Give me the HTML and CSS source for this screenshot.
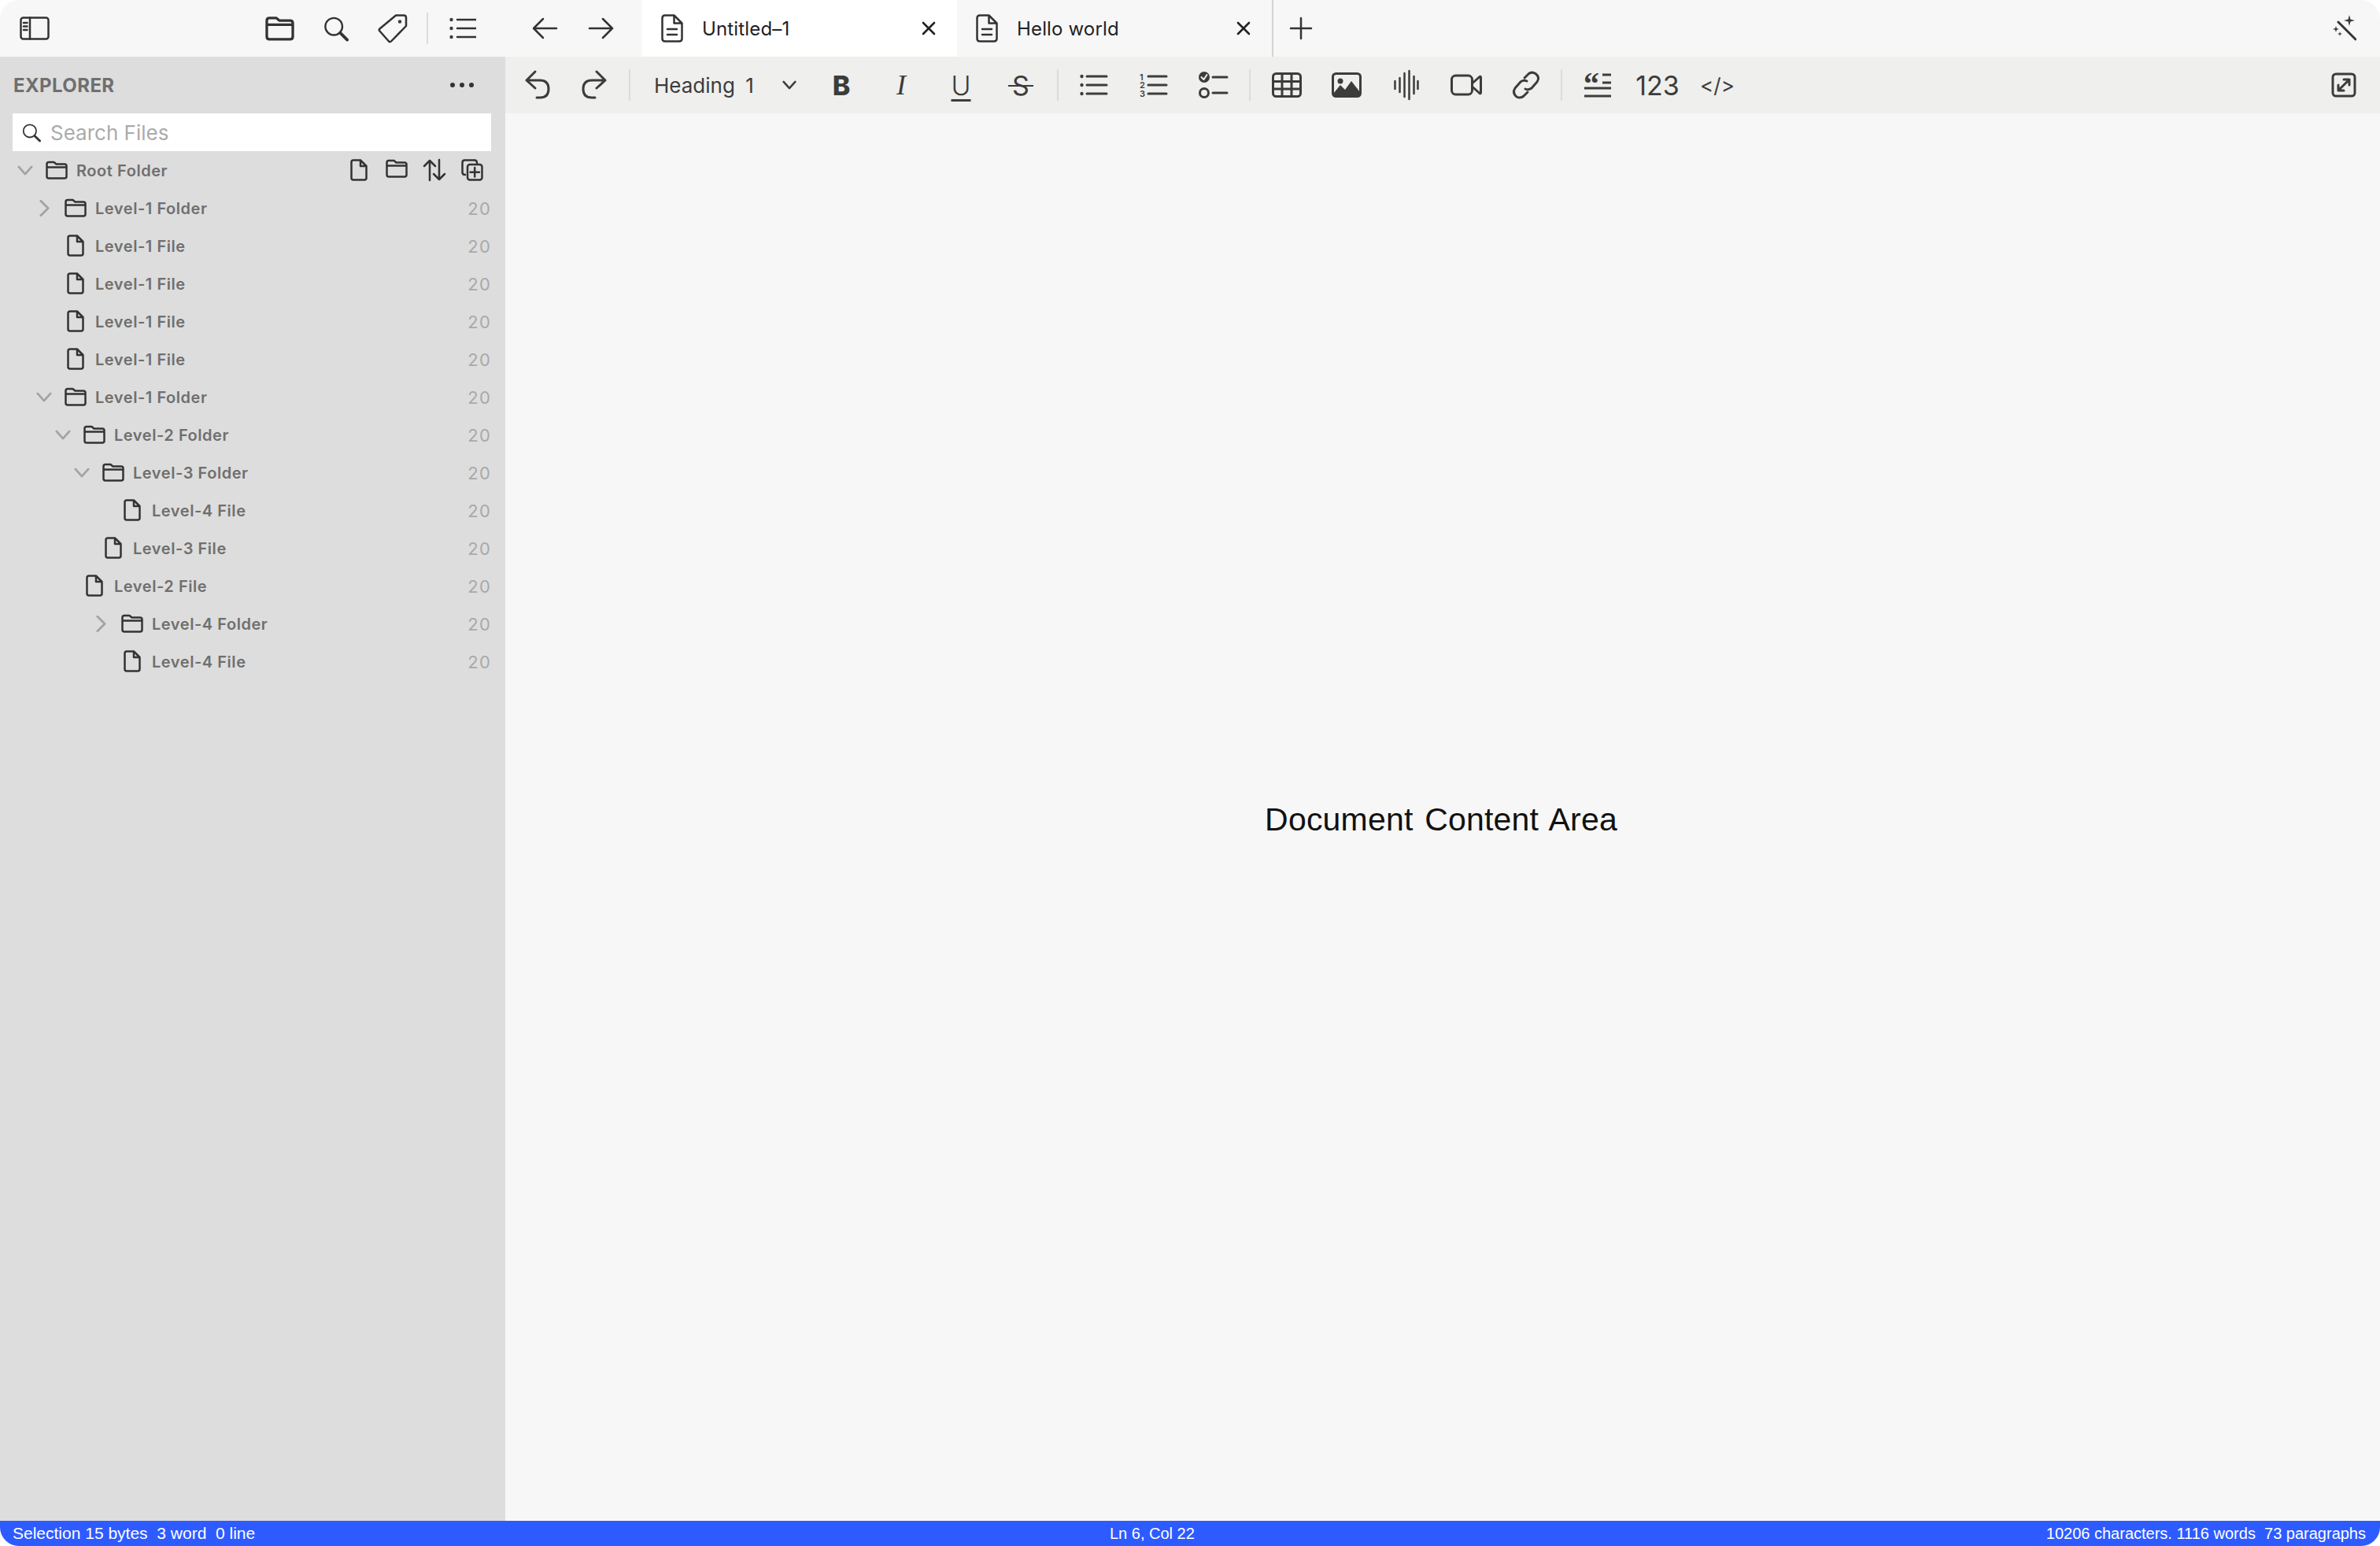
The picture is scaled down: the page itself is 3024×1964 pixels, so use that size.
FILE: index.html
```html
<!DOCTYPE html>
<html lang="en">
<head>
<meta charset="UTF-8">
<title>Explorer</title>
<link rel="stylesheet" href="styles.css">
</head>
<body>

<svg class="defs" width="0" height="0">
    <symbol id="i-folder" viewBox="0 0 28 24"><path d="M1.5 20V4.5Q1.5 2 4 2H10.5L13.5 4.5H24Q26.5 4.5 26.5 7V20Q26.5 22.5 24 22.5H4Q1.5 22.5 1.5 20ZM1.5 8.5H26.5"/></symbol>
    <symbol id="i-file" viewBox="0 0 22 28"><path d="M4 1.5H13L20.5 9V24Q20.5 26.5 18 26.5H4Q1.5 26.5 1.5 24V4Q1.5 1.5 4 1.5ZM13 1.5V9H20.5"/></symbol>
    <symbol id="i-doc" viewBox="0 0 28 36"><path d="M5 1.5H16.5L26.5 11.5V31Q26.5 34.5 23 34.5H5Q1.5 34.5 1.5 31V5Q1.5 1.5 5 1.5ZM16.5 1.5V11.5H26.5M8 19H20M8 26H20"/></symbol>
    <symbol id="i-search" viewBox="0 0 34 34"><circle cx="14" cy="14" r="11.5"/><path d="M22.5 22.5L32 32" stroke-width="4"/></symbol>
    <symbol id="i-list" viewBox="0 0 34 30"><path d="M10 4H34M10 15H34M10 26H34"/><circle class="fill" cx="2.5" cy="4" r="2.2"/><circle class="fill" cx="2.5" cy="15" r="2.2"/><circle class="fill" cx="2.5" cy="26" r="2.2"/></symbol>
    <symbol id="i-chev-down" viewBox="0 0 22 14"><path d="M2 2L11 12L20 2"/></symbol>
    <symbol id="i-chev-right" viewBox="0 0 14 24"><path d="M2 2L12 12L2 22"/></symbol>
    <symbol id="i-close" viewBox="0 0 18 18"><path d="M2 2L16 16M16 2L2 16"/></symbol>
</svg>

<div class="window">

    <header class="titlebar">
        <div class="side-tools">
            <button class="btn btn-toggle">
                <svg class="ic" width="38" height="30" viewBox="0 0 38 30"><rect x="1.5" y="1.5" width="35" height="27" rx="3"/><path d="M13 1.5V28.5M5 8H9.5M5 12.5H9.5M5 17H9.5" /></svg>
            </button>
            <span class="spring"></span>
            <button class="btn"><svg class="ic" width="37" height="32"><use href="#i-folder"/></svg></button>
            <button class="btn"><svg class="ic" width="32" height="33"><use href="#i-search"/></svg></button>
            <button class="btn">
                <svg class="ic" width="38" height="38" viewBox="0 0 38 38"><path d="M23 2.5H33Q36 2.5 36 5.5V16L17 35.5Q15.500 37 14 35.500L2.500 22.500Q1 21 2.500 19.500Z"/><circle class="fill" cx="28" cy="10.500" r="2.200"/></svg>
            </button>
            <span class="sep sep-top"></span>
            <button class="btn btn-last"><svg class="ic" width="34" height="30"><use href="#i-list"/></svg></button>
        </div>
        <div class="tabstrip">
            <div class="nav">
                <button class="btn btn-nav">
                    <svg class="ic" width="32" height="28" viewBox="0 0 32 28"><path d="M31 14H2M14 2L2 14L14 26"/></svg>
                </button>
                <button class="btn btn-nav">
                    <svg class="ic" width="32" height="28" viewBox="0 0 32 28"><path d="M1 14H30M18 2L30 14L18 26"/></svg>
                </button>
            </div>
            <div class="tab active">
                <svg class="ic" width="28" height="36"><use href="#i-doc"/></svg>
                <span class="tab-name">Untitled–1</span>
                <svg class="ic ic-x" width="18" height="18"><use href="#i-close"/></svg>
            </div>
            <div class="tab">
                <svg class="ic" width="28" height="36"><use href="#i-doc"/></svg>
                <span class="tab-name">Hello world</span>
                <svg class="ic ic-x" width="18" height="18"><use href="#i-close"/></svg>
            </div>
            <button class="btn btn-add">
                <svg class="ic" width="28" height="28" viewBox="0 0 28 28"><path d="M14 1V27M1 14H27"/></svg>
            </button>
            <button class="btn btn-wand">
                <svg width="32" height="34" viewBox="0 0 32 34"><path class="ic-line" d="M9 9L31 31" stroke-width="3"/><path class="solid" d="M23 0L24.500 5.500L30 7L24.500 8.500L23 14L21.500 8.500L16 7L21.500 5.500ZM6 14L7 17L10 18L7 19L6 22L5 19L2 18L5 17ZM11 21L11.700 23.300L14 24L11.700 24.700L11 27L10.300 24.700L8 24L10.300 23.300Z"/></svg>
            </button>
        </div>
    </header>

    <div class="workspace">
        <aside class="sidebar">
            <div class="side-head">
                <span class="side-title">EXPLORER</span>
                <span class="dots"><i></i><i></i><i></i></span>
            </div>
            <div class="search">
                <svg class="ic ic-thin" width="24" height="25"><use href="#i-search"/></svg>
                <span class="search-text">Search Files</span>
            </div>
            <ul class="tree">
                <li class="row lvl-0">
                    <span class="chev"><svg class="ic ic-chev" width="20" height="13"><use href="#i-chev-down"/></svg></span>
                    <span class="node"><svg class="ic" width="28" height="24"><use href="#i-folder"/></svg></span>
                    <span class="label">Root Folder</span>
                    <span class="actions">
                        <span class="act"><svg class="ic" width="22" height="28"><use href="#i-file"/></svg></span>
                        <span class="act"><svg class="ic" width="28" height="24"><use href="#i-folder"/></svg></span>
                        <span class="act"><svg class="ic" width="30" height="28" viewBox="0 0 30 28"><path d="M9 27V2M2 9L9 2L16 9M21 1V26M14 19L21 26L28 19"/></svg></span>
                        <span class="act"><svg class="ic" width="28" height="28" viewBox="0 0 28 28"><path d="M5 20Q1.500 20 1.500 17V4.500Q1.500 1.500 4.500 1.500H17Q20 1.500 20 5"/><rect x="8" y="7" width="18.500" height="19.500" rx="3"/><path d="M17.200 11V22.500M11.500 16.700H23"/></svg></span>
                    </span>
                </li>
                <li class="row lvl-1">
                    <span class="chev"><svg class="ic ic-chev" width="13" height="23"><use href="#i-chev-right"/></svg></span>
                    <span class="node"><svg class="ic" width="28" height="24"><use href="#i-folder"/></svg></span>
                    <span class="label">Level-1 Folder</span><span class="count">20</span>
                </li>
                <li class="row lvl-1">
                    <span class="chev"></span>
                    <span class="node"><svg class="ic" width="22" height="28"><use href="#i-file"/></svg></span>
                    <span class="label">Level-1 File</span><span class="count">20</span>
                </li>
                <li class="row lvl-1">
                    <span class="chev"></span>
                    <span class="node"><svg class="ic" width="22" height="28"><use href="#i-file"/></svg></span>
                    <span class="label">Level-1 File</span><span class="count">20</span>
                </li>
                <li class="row lvl-1">
                    <span class="chev"></span>
                    <span class="node"><svg class="ic" width="22" height="28"><use href="#i-file"/></svg></span>
                    <span class="label">Level-1 File</span><span class="count">20</span>
                </li>
                <li class="row lvl-1">
                    <span class="chev"></span>
                    <span class="node"><svg class="ic" width="22" height="28"><use href="#i-file"/></svg></span>
                    <span class="label">Level-1 File</span><span class="count">20</span>
                </li>
                <li class="row lvl-1">
                    <span class="chev"><svg class="ic ic-chev" width="20" height="13"><use href="#i-chev-down"/></svg></span>
                    <span class="node"><svg class="ic" width="28" height="24"><use href="#i-folder"/></svg></span>
                    <span class="label">Level-1 Folder</span><span class="count">20</span>
                </li>
                <li class="row lvl-2">
                    <span class="chev"><svg class="ic ic-chev" width="20" height="13"><use href="#i-chev-down"/></svg></span>
                    <span class="node"><svg class="ic" width="28" height="24"><use href="#i-folder"/></svg></span>
                    <span class="label">Level-2 Folder</span><span class="count">20</span>
                </li>
                <li class="row lvl-3">
                    <span class="chev"><svg class="ic ic-chev" width="20" height="13"><use href="#i-chev-down"/></svg></span>
                    <span class="node"><svg class="ic" width="28" height="24"><use href="#i-folder"/></svg></span>
                    <span class="label">Level-3 Folder</span><span class="count">20</span>
                </li>
                <li class="row lvl-4">
                    <span class="chev"></span>
                    <span class="node"><svg class="ic" width="22" height="28"><use href="#i-file"/></svg></span>
                    <span class="label">Level-4 File</span><span class="count">20</span>
                </li>
                <li class="row lvl-3">
                    <span class="chev"></span>
                    <span class="node"><svg class="ic" width="22" height="28"><use href="#i-file"/></svg></span>
                    <span class="label">Level-3 File</span><span class="count">20</span>
                </li>
                <li class="row lvl-2">
                    <span class="chev"></span>
                    <span class="node"><svg class="ic" width="22" height="28"><use href="#i-file"/></svg></span>
                    <span class="label">Level-2 File</span><span class="count">20</span>
                </li>
                <li class="row lvl-4">
                    <span class="chev"><svg class="ic ic-chev" width="13" height="23"><use href="#i-chev-right"/></svg></span>
                    <span class="node"><svg class="ic" width="28" height="24"><use href="#i-folder"/></svg></span>
                    <span class="label">Level-4 Folder</span><span class="count">20</span>
                </li>
                <li class="row lvl-4">
                    <span class="chev"></span>
                    <span class="node"><svg class="ic" width="22" height="28"><use href="#i-file"/></svg></span>
                    <span class="label">Level-4 File</span><span class="count">20</span>
                </li>
            </ul>
        </aside>

        <main class="editor">
            <div class="toolbar">
                <button class="tool tool-hist">
                    <svg class="ic ic-bar" width="32" height="36" viewBox="0 0 32 36"><path d="M13 1L2 12L13 22M2 12H19Q30 12 30 23Q30 34 19 34H15"/></svg>
                </button>
                <button class="tool tool-hist">
                    <svg class="ic ic-bar" width="32" height="36" viewBox="0 0 32 36"><path d="M19 1L30 12L19 22M30 12H13Q2 12 2 23Q2 34 13 34H17"/></svg>
                </button>
                <span class="sep sep-bar sep-first"></span>
                <div class="heading-select">
                    <span class="heading-text">Heading 1</span>
                    <svg class="ic ic-bar" width="18" height="12"><use href="#i-chev-down"/></svg>
                </div>
                <button class="tool glyph glyph-b">B</button>
                <button class="tool glyph glyph-i">I</button>
                <button class="tool glyph glyph-u">U</button>
                <button class="tool glyph glyph-s"><span class="strike">S</span></button>
                <span class="sep sep-bar"></span>
                <button class="tool">
                    <svg class="ic ic-bar" width="34" height="28" viewBox="0 0 34 28"><path d="M9 3H34M9 14H34M9 25H34"/><circle class="fill" cx="2.500" cy="3" r="2.200"/><circle class="fill" cx="2.500" cy="14" r="2.200"/><circle class="fill" cx="2.500" cy="25" r="2.200"/></svg>
                </button>
                <button class="tool">
                    <svg class="ic ic-bar" width="34" height="32" viewBox="0 0 34 32"><path d="M11 5H34M11 16H34M11 27H34"/><text class="num" x="0" y="10">1</text><text class="num" x="0" y="20">2</text><text class="num" x="0" y="31">3</text></svg>
                </button>
                <button class="tool">
                    <svg class="ic ic-bar" width="36" height="36" viewBox="0 0 36 36"><circle class="fill" cx="7" cy="8" r="7"/><path class="tick" d="M3.500 8L6.500 11L10.500 5"/><circle cx="7" cy="28" r="5.500"/><path d="M18 8H36M18 28H36"/></svg>
                </button>
                <span class="sep sep-bar sep-media"></span>
                <button class="tool">
                    <svg class="ic ic-bar" width="38" height="32" viewBox="0 0 38 32"><rect x="1.500" y="1.500" width="35" height="29" rx="4"/><path d="M1.500 11.500H36.500M1.500 21H36.500M13 1.500V30.500M25 1.500V30.500"/></svg>
                </button>
                <button class="tool">
                    <svg class="ic ic-bar" width="38" height="32" viewBox="0 0 38 32"><rect x="1.500" y="1.500" width="35" height="29" rx="4"/><circle class="fill" cx="11" cy="11" r="3.500"/><path class="solid" d="M2 29V27L11 16L17 22L25 11L36 25V29Z"/></svg>
                </button>
                <button class="tool">
                    <svg class="ic ic-bar ic-thin" width="32" height="36" viewBox="0 0 32 36"><path d="M1.500 13V23M7.500 9V27M13.500 3V33M19.500 0V36M25.500 7V29M30.500 13V23"/></svg>
                </button>
                <button class="tool">
                    <svg class="ic ic-bar" width="40" height="30" viewBox="0 0 40 30"><rect x="1.500" y="3" width="26" height="24" rx="5"/><path d="M27.500 13L37 4.500Q38.500 3.500 38.500 5.500V24.500Q38.500 26.500 37 25.500L27.500 17"/></svg>
                </button>
                <button class="tool">
                    <svg class="ic ic-bar" width="36" height="36" viewBox="0 0 36 36"><path d="M16 9L21 4Q25 0.500 30 3.500Q36 8 32 14L25 22Q21 25 17 23M20 27L15 32Q11 35.500 6 33Q0 28 4 22L11 14Q15 11 19 13"/></svg>
                </button>
                <span class="sep sep-bar sep-last"></span>
                <button class="tool">
                    <svg class="ic ic-bar" width="34" height="30" viewBox="0 0 34 30"><path d="M23 2H34M23 12H34M0 19H34M0 29H34" stroke-width="3" stroke-linecap="butt"/><text class="quote" x="-1" y="27">“</text></svg>
                </button>
                <button class="tool glyph glyph-num">123</button>
                <button class="tool glyph glyph-code">&lt;/&gt;</button>
                <button class="tool tool-expand">
                    <svg class="ic ic-bar" width="32" height="32" viewBox="0 0 32 32"><rect x="2" y="2" width="28" height="28" rx="4" stroke-width="3"/><path d="M9 23L23 9M16 9H23V16M9 16V23H16" stroke-width="3"/></svg>
                </button>
            </div>
            <div class="document">Document Content Area</div>
        </main>
    </div>

    <footer class="statusbar">
        <span class="status-left">Selection 15 bytes&nbsp;&nbsp;3 word&nbsp;&nbsp;0 line</span>
        <span class="status-mid">Ln 6, Col 22</span>
        <span class="status-right">10206 characters. 1116 words&nbsp;&nbsp;73 paragraphs</span>
    </footer>
</div>

</body>
</html>
```

FILE: styles.css
```css
html, body {
    margin: 0;
    padding: 0;
    background-color: #fff;
}
body {
    font-family: Inter, "Liberation Sans", sans-serif;
    color: #222;
}
button {
    padding: 0;
    border: none;
    background: none;
    font: inherit;
    color: inherit;
}
ul {
    list-style: none;
    margin: 0;
    padding: 0;
}
.defs {
    position: absolute;
}

.window {
    width: 3024px;
    height: 1964px;
    display: flex;
    flex-direction: column;
    overflow: hidden;
    border-radius: 24px;
    background-color: #f7f7f7;
}

/* svg icons */
.ic {
    display: block;
    fill: none;
    stroke: #333;
    stroke-width: 2.5;
    stroke-linejoin: round;
    stroke-linecap: round;
    overflow: visible;
}
.ic-bar {
    stroke: #3c3c3a;
    stroke-width: 3;
}
.ic-thin {
    stroke-width: 2.5;
}
.ic-chev {
    stroke: #a3a3a3;
    stroke-width: 3;
}
.ic-x {
    stroke: #222;
    stroke-width: 2.6;
}
.fill,
.solid {
    fill: #3c3c3a;
    stroke: none;
}
.ic-line {
    stroke: #333;
    fill: none;
    stroke-linecap: round;
}
.ic .tick {
    stroke: #efefed;
    stroke-width: 2;
}
.ic .num {
    font-size: 11px;
    font-weight: 600;
    fill: #3c3c3a;
    stroke: none;
}
.ic .quote {
    font-family: "Liberation Serif", serif;
    font-size: 40px;
    font-weight: 700;
    fill: #3c3c3a;
    stroke: none;
}

/* top row */
.titlebar {
    height: 72px;
    display: flex;
    flex: none;
}
.side-tools {
    width: 642px;
    display: flex;
    align-items: center;
    flex: none;
}
.btn {
    width: 72px;
    height: 72px;
    display: flex;
    align-items: center;
    justify-content: center;
    flex: none;
}
.btn-toggle {
    margin-left: 8px;
}
.spring {
    flex: 1;
}
.btn-last {
    margin: 0 18px 0 8px;
}
.sep {
    display: block;
    width: 2px;
    background-color: #dcdcda;
    flex: none;
}
.sep-top {
    height: 40px;
    margin-left: 7px;
    margin-right: 0;
}
.tabstrip {
    flex: 1;
    display: flex;
    align-items: stretch;
}
.nav {
    width: 174px;
    display: flex;
    padding-left: 14px;
    box-sizing: border-box;
}
.tab {
    width: 400px;
    display: flex;
    align-items: center;
    padding: 0 27px 0 24px;
    box-sizing: border-box;
    flex: none;
    font-size: 24px;
}
.tab.active {
    background-color: #fff;
}
.tab-name {
    flex: 1;
    margin-left: 24px;
    color: #222;
    letter-spacing: 0.15px;
}
.btn-add {
    border-left: 2px solid #d4d4d4;
    width: 72px;
}
.btn-wand {
    margin-left: auto;
    margin-right: 10px;
}

/* sidebar */
.workspace {
    flex: 1;
    display: flex;
    min-height: 0;
}
.sidebar {
    width: 642px;
    flex: none;
    background-color: #dddddd;
}
.side-head {
    height: 72px;
    display: flex;
    align-items: center;
    justify-content: space-between;
    padding: 0 40px 0 17px;
}
.side-title {
    font-size: 24px;
    font-weight: 700;
    letter-spacing: 0.4px;
    color: #6f6f6f;
}
.dots {
    display: flex;
    gap: 6px;
}
.dots i {
    width: 6px;
    height: 6px;
    border-radius: 50%;
    background-color: #333;
}
.search {
    height: 48px;
    margin: 0 18px 0 16px;
    display: flex;
    align-items: center;
    background-color: #fff;
    padding-left: 12px;
}
.search-text {
    margin-left: 12px;
    font-size: 26px;
    color: #ababab;
}
.row {
    height: 48px;
    display: flex;
    align-items: center;
    padding-right: 18px;
    font-size: 20px;
    color: #6f6f6f;
}
.lvl-0 { padding-left: 16px; }
.lvl-1 { padding-left: 40px; }
.lvl-2 { padding-left: 64px; }
.lvl-3 { padding-left: 88px; }
.lvl-4 { padding-left: 112px; }
.chev {
    width: 32px;
    display: flex;
    justify-content: center;
    flex: none;
}
.node {
    width: 48px;
    display: flex;
    justify-content: center;
    flex: none;
}
.label {
    flex: 1;
    margin-left: 1px;
    padding-top: 2px;
    font-weight: 600;
    letter-spacing: 0.55px;
}
.count {
    padding-top: 1px;
    font-size: 22px;
    color: #a9a9a9;
    letter-spacing: 1.2px;
}
.actions {
    display: flex;
}
.act {
    width: 48px;
    display: flex;
    justify-content: center;
}

/* editor */
.editor {
    flex: 1;
    display: flex;
    flex-direction: column;
    min-width: 0;
}
.toolbar {
    height: 72px;
    flex: none;
    display: flex;
    align-items: center;
    padding-left: 5px;
    background-color: #efefed;
}
.tool {
    width: 76px;
    height: 72px;
    display: flex;
    align-items: center;
    justify-content: center;
    flex: none;
    color: #3c3c3a;
}
.tool-hist {
    width: 72px;
}
.sep-bar {
    height: 40px;
    margin: 0 6px 0 8px;
}
.sep-first {
    margin-right: 30px;
}
.sep-media {
    margin-right: 8px;
}
.sep-last {
    margin-left: 6px;
    margin-right: 7px;
}
.heading-select {
    width: 200px;
    display: flex;
    align-items: center;
    flex: none;
    box-sizing: border-box;
    padding-right: 19px;
}
.heading-text {
    flex: 1;
    font-size: 26px;
    word-spacing: 6px;
    color: #3c3c3a;
}
.glyph {
    font-size: 34px;
}
.glyph-b {
    font-weight: 800;
}
.glyph-i {
    font-family: "Liberation Serif", serif;
    font-style: italic;
    font-size: 36px;
}
.glyph-u {
    font-weight: 300;
    text-decoration: underline;
    text-underline-offset: 5px;
    text-decoration-thickness: 3px;
}
.glyph-s {
    font-weight: 400;
}
.strike {
    position: relative;
}
.strike::after {
    content: "";
    position: absolute;
    left: -5px;
    right: -5px;
    top: 50%;
    height: 2px;
    background-color: #3c3c3a;
}
.glyph-num {
    font-size: 34px;
    font-weight: 400;
}
.glyph-code {
    font-size: 26px;
}
.tool-expand {
    margin-left: auto;
    margin-right: 8px;
}
.document {
    flex: 1;
    display: flex;
    align-items: center;
    justify-content: center;
    padding-top: 6px;
    padding-right: 4px;
    font-family: "Liberation Sans", sans-serif;
    font-size: 41px;
    letter-spacing: 0.2px;
    word-spacing: 3px;
    color: #111;
}

/* status */
.statusbar {
    height: 32px;
    flex: none;
    display: grid;
    grid-template-columns: 1394px auto 1fr;
    align-items: center;
    padding: 0 18px 0 16px;
    background-color: #2e5bff;
    color: #fff;
    font-family: "Liberation Sans", sans-serif;
    font-size: 20px;
}
.status-left {
    font-size: 21px;
}
.status-right {
    text-align: right;
}
```
